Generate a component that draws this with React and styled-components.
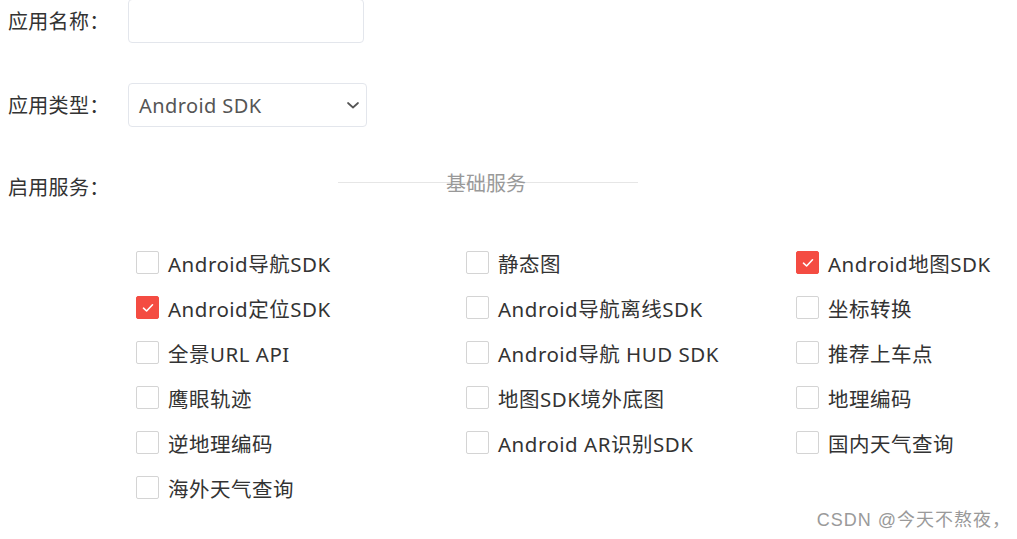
import React from "react";
import styled, { createGlobalStyle } from "styled-components";

const Global = createGlobalStyle`
  html, body { margin: 0; padding: 0; background: #fff; }
  body { font-family: "Noto Sans", "Noto Sans CJK SC", sans-serif; overflow: hidden; }
`;

const Page = styled.div`
  position: relative;
  width: 1017px;
  height: 539px;
  padding-left: 8px;
  box-sizing: border-box;
  overflow: hidden;
`;

const Row = styled.div`
  display: flex;
  align-items: center;
  margin-top: ${(p) => p.$mt}px;
  height: 44px;
`;

const Label = styled.div`
  width: 120px;
  font-size: 20px;
  letter-spacing: 0.3px;
  color: #333;
  font-family: "Noto Sans CJK SC", sans-serif;
  line-height: 44px;
  white-space: nowrap;
`;

const Input = styled.div`
  width: 236px;
  height: 44px;
  box-sizing: border-box;
  border: 1px solid #e3e6ec;
  border-radius: 4px;
`;

const Select = styled.div`
  width: 239px;
  height: 44px;
  box-sizing: border-box;
  border: 1px solid #e3e6ec;
  border-radius: 4px;
  display: flex;
  align-items: center;
  justify-content: space-between;
  padding: 0 6px 0 10px;
  font-size: 20px;
  letter-spacing: 0.4px;
  color: #555;
`;

const Divider = styled.div`
  position: relative;
  margin-left: 210px;
  margin-top: -10px;
  width: 300px;
  height: 1px;
  background: #e6e6e6;
`;

const DividerText = styled.span`
  position: absolute;
  left: 108px;
  top: -11px;
  font-size: 20px;
  line-height: 24px;
  color: #999;
  font-family: "Noto Sans CJK SC", sans-serif;
  white-space: nowrap;
`;

const Grid = styled.div`
  display: grid;
  grid-template-columns: 330px 330px auto;
  grid-auto-rows: 45px;
  margin-top: 31px;
  margin-left: 128px;
`;

const Item = styled.label`
  display: flex;
  align-items: center;
  gap: 9px;
  font-size: 20.5px;
  letter-spacing: 0.5px;
  color: #333;
  white-space: nowrap;
`;

const Box = styled.span`
  width: 23px;
  height: 23px;
  box-sizing: border-box;
  border-radius: 2px;
  border: 1px solid ${(p) => (p.$on ? "#f44c42" : "#d4d4d4")};
  background: ${(p) => (p.$on ? "#f44c42" : "#fff")};
  display: flex;
  align-items: center;
  justify-content: center;
  flex-shrink: 0;
`;

const Watermark = styled.div`
  position: absolute;
  right: 6px;
  bottom: 8px;
  font-size: 18px;
  letter-spacing: 1px;
  color: #9a9a9a;
  font-family: "Liberation Sans", "Noto Sans CJK SC", sans-serif;
`;

const items = [
  ["Android导航SDK", false],
  ["静态图", false],
  ["Android地图SDK", true],
  ["Android定位SDK", true],
  ["Android导航离线SDK", false],
  ["坐标转换", false],
  ["全景URL API", false],
  ["Android导航 HUD SDK", false],
  ["推荐上车点", false],
  ["鹰眼轨迹", false],
  ["地图SDK境外底图", false],
  ["地理编码", false],
  ["逆地理编码", false],
  ["Android AR识别SDK", false],
  ["国内天气查询", false],
  ["海外天气查询", false],
];

const Check = () => (
  <svg width="12" height="10" viewBox="0 0 12 10">
    <path d="M1.5 5.2 L4.6 8 L10.5 1.8" fill="none" stroke="#fff" strokeWidth="1.6" strokeLinecap="round" strokeLinejoin="round" />
  </svg>
);

const Chevron = () => (
  <svg width="14" height="10" viewBox="0 0 14 10">
    <path d="M2 3 L7 7.5 L12 3" fill="none" stroke="#555" strokeWidth="1.7" strokeLinecap="round" strokeLinejoin="round" />
  </svg>
);

export default function App() {
  return (
    <Page>
      <Global />
      <Row $mt={-1}>
        <Label>应用名称：</Label>
        <Input />
      </Row>
      <Row $mt={40}>
        <Label>应用类型：</Label>
        <Select>
          <span>Android SDK</span>
          <Chevron />
        </Select>
      </Row>
      <Row $mt={38}>
        <Label>启用服务：</Label>
        <Divider>
          <DividerText>基础服务</DividerText>
        </Divider>
      </Row>
      <Grid>
        {items.map(([t, on]) => (
          <Item key={t}>
            <Box $on={on}>{on && <Check />}</Box>
            {t}
          </Item>
        ))}
      </Grid>
      <Watermark>CSDN @今天不熬夜，</Watermark>
    </Page>
  );
}
